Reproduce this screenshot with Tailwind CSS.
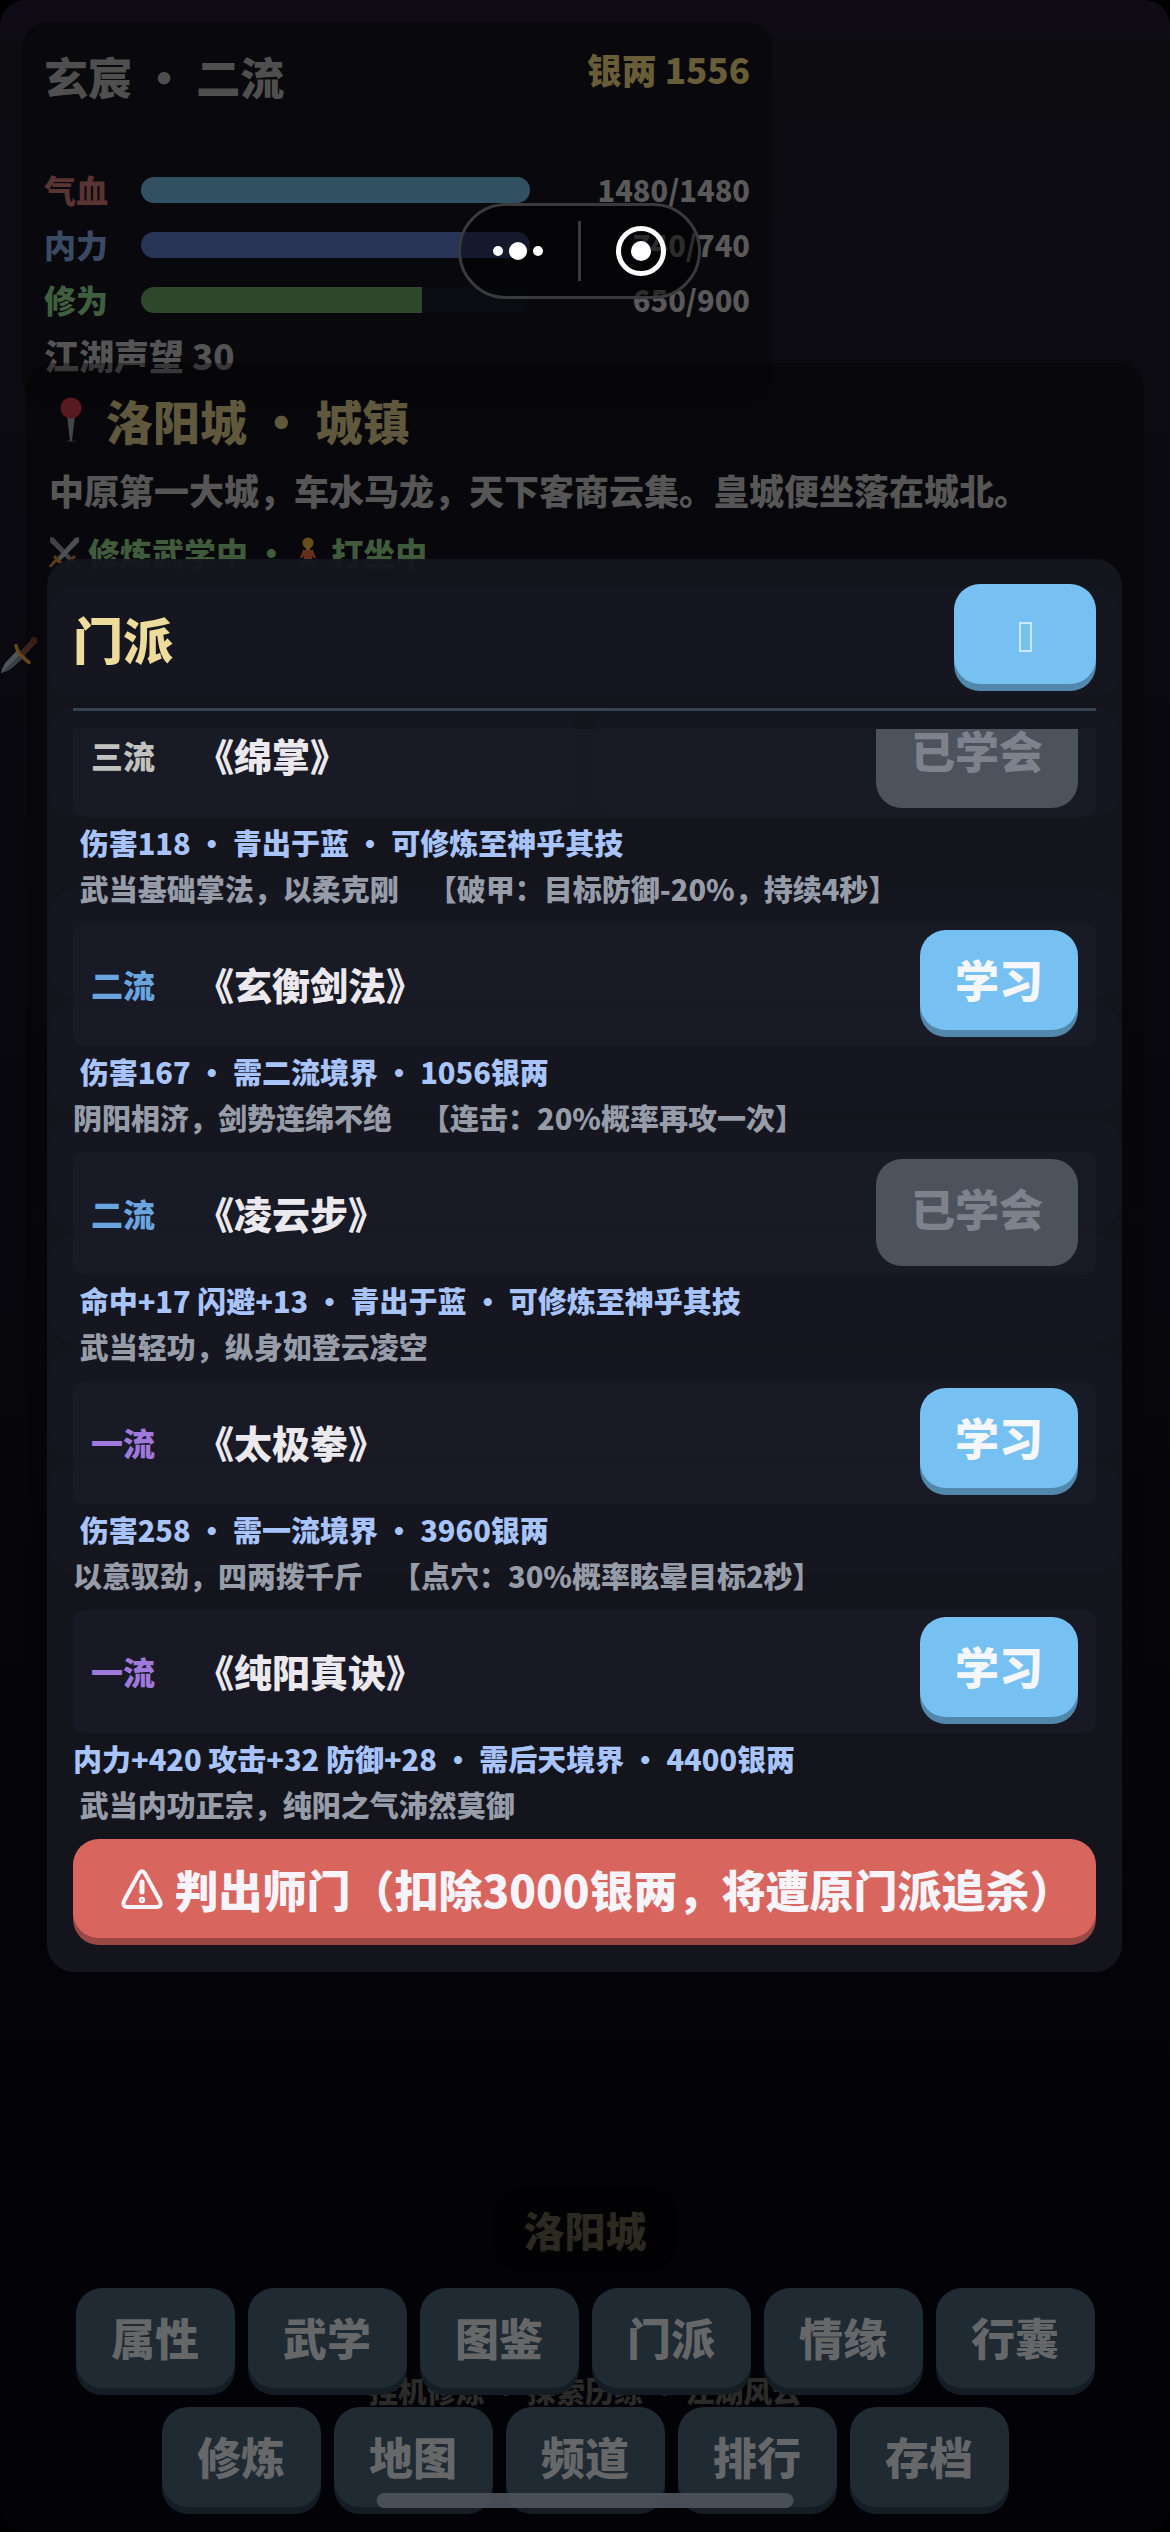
<!DOCTYPE html>
<html lang="zh-CN">
<head>
<meta charset="utf-8">
<meta name="viewport" content="width=device-width, initial-scale=1">
<title>门派</title>
<script src="https://cdn.jsdelivr.net/npm/@tailwindcss/browser@4"></script>
</head>
<body class="bg-black font-['Noto_Sans_CJK_SC',sans-serif] font-black [text-spacing-trim:space-all]">
<div class="relative isolate flex min-h-screen flex-col overflow-hidden rounded-[26px] bg-[linear-gradient(#0f0c15_0_37px,#0d0c11_37px,#0b0a10_540px,#06050a_1500px,#030207_2100px)]">

  <!-- Player status -->
  <section class="ml-[22px] mt-[22px] h-[381px] w-[750px] rounded-[26px] bg-[#09090d] px-[22px] pt-[22px] text-[#595959]">
    <header class="flex h-[118px] items-start justify-between">
      <h1 class="text-[44px] leading-[64px] text-[#4f4f4f]">玄宸 · 二流</h1>
      <p class="text-[35px] leading-[50px] text-[#685d37]">银两 1556</p>
    </header>
    <dl class="text-[32px] leading-[55px]">
      <div class="flex items-center">
        <dt class="w-[97px] text-[#5a3432]">气血</dt>
        <dd class="h-[26px] w-[389px] rounded-full bg-[#315163]"></dd>
        <dd class="flex-1 text-right text-[29px]">1480/1480</dd>
      </div>
      <div class="flex items-center">
        <dt class="w-[97px] text-[#3a4964]">内力</dt>
        <dd class="h-[26px] w-[389px] rounded-full bg-[#283557]"></dd>
        <dd class="flex-1 text-right text-[29px]">740/740</dd>
      </div>
      <div class="flex items-center">
        <dt class="w-[97px] text-[#3f5f3e]">修为</dt>
        <dd class="h-[26px] w-[389px] overflow-hidden rounded-full bg-[#090d12]"><div class="h-full bg-[#2c4729]" style="width:72.2%"></div></dd>
        <dd class="flex-1 text-right text-[29px]">650/900</dd>
      </div>
    </dl>
    <p class="text-[35px] leading-[56px] text-[#545454]">江湖声望 30</p>
  </section>

  <!-- Location scene -->
  <section class="-mt-[40px] mx-[26px] flex flex-1 flex-col rounded-[26px] bg-linear-to-b from-black/35 to-black/0 px-[23px] pt-[22px] text-[#565656]">
    <h2 class="flex h-[70px] items-center text-[47px] text-[#5f583c]">
      <svg class="ml-[10px] mr-[23px] h-[46px] w-[24px]" viewBox="0 0 24 46" aria-hidden="true"><ellipse cx="12" cy="44" rx="5" ry="1.5" fill="#17171a"/><path d="M8 18h8l-3 26h-2z" fill="#41474b"/><circle cx="12" cy="11" r="10.5" fill="#591a1f"/></svg>
      洛阳城 · 城镇
    </h2>
    <p class="text-[35px] leading-[70px]">中原第一大城，车水马龙，天下客商云集。皇城便坐落在城北。</p>
    <p class="flex h-[54px] items-center text-[32px] text-[#3f5b3c]">
      <svg class="mr-[8px] h-[30px] w-[31px]" viewBox="0 0 31 30" aria-hidden="true"><path d="M1 0l4 1 20 22-3 3L1 5z" fill="#3f4346"/><path d="M30 0l-4 1L6 23l3 3L30 5z" fill="#4b4f52"/><path d="M5 19l8 8M1 30l6-7M26 19l-8 8M30 30l-6-7" stroke="#5c3a16" stroke-width="3"/></svg>
      修炼武学中 ·
      <svg class="ml-[10px] mr-[12px] h-[31px] w-[22px]" viewBox="0 0 22 31" aria-hidden="true"><circle cx="11" cy="6" r="5.500" fill="#65501b"/><path d="M9 10h4v4H9z" fill="#65501b"/><path d="M6 13h10l3 8h-3l-1-3v4H7v-4l-1 3H3z" fill="#632f1c"/><path d="M1 28q10-10 20 0z" fill="#3d3327"/></svg>
      打坐中
    </p>

    <!-- Scene actions, seen faintly through the sect panel -->
    <div class="mt-[9px] grid grid-cols-2 gap-x-[16px] gap-y-[13px]" aria-hidden="true">
      <div class="col-span-2 h-[107px] rounded-[26px] bg-[#1f2a33]"></div>
      <div class="h-[107px] rounded-[26px] bg-[#1f2a33]"></div>
      <div class="h-[107px] rounded-[26px] bg-[#1f2a33]"></div>
    </div>
    <div class="mt-[75px] flex flex-col gap-[8px]" aria-hidden="true">
      <div class="h-[107px] rounded-[26px] bg-[#1f2a33]"></div>
      <div class="h-[107px] rounded-[26px] bg-[#1f2a33]"></div>
      <div class="h-[107px] rounded-[26px] bg-[#1f2a33]"></div>
      <div class="h-[107px] rounded-[26px] bg-[#1f2a33]"></div>
      <div class="h-[107px] rounded-[26px] bg-[#1f2a33]"></div>
      <div class="h-[107px] rounded-[26px] bg-[#1f2a33]"></div>
    </div>
    <p class="mt-auto mb-[17px] self-center rounded-[26px] bg-black/40 px-[30px] text-[41px] leading-[82px] text-[#2b2920]">洛阳城</p>
  </section>

  <!-- Bottom navigation -->
  <nav class="relative flex flex-wrap justify-center gap-[13px] px-[70px] pb-[19px] pt-px text-[44px] leading-[98px] text-[#666769]">
    <p class="absolute inset-x-0 top-[81px] -z-10 text-center text-[29px] leading-[44px] text-[#2b2b29]">挂机修炼 · 探索历练 · 江湖风云</p>
    <button class="mb-[6px] h-[100px] w-[159px] rounded-[26px] bg-[#1f2a33] pb-[2px] shadow-[0_7px_0_#151d24]">属性</button>
    <button class="mb-[6px] h-[100px] w-[159px] rounded-[26px] bg-[#1f2a33] pb-[2px] shadow-[0_7px_0_#151d24]">武学</button>
    <button class="mb-[6px] h-[100px] w-[159px] rounded-[26px] bg-[#1f2a33] pb-[2px] shadow-[0_7px_0_#151d24]">图鉴</button>
    <button class="mb-[6px] h-[100px] w-[159px] rounded-[26px] bg-[#1f2a33] pb-[2px] shadow-[0_7px_0_#151d24]">门派</button>
    <button class="mb-[6px] h-[100px] w-[159px] rounded-[26px] bg-[#1f2a33] pb-[2px] shadow-[0_7px_0_#151d24]">情缘</button>
    <button class="mb-[6px] h-[100px] w-[159px] rounded-[26px] bg-[#1f2a33] pb-[2px] shadow-[0_7px_0_#151d24]">行囊</button>
    <button class="mb-[6px] h-[100px] w-[159px] rounded-[26px] bg-[#1f2a33] pb-[2px] shadow-[0_7px_0_#151d24]">修炼</button>
    <button class="mb-[6px] h-[100px] w-[159px] rounded-[26px] bg-[#1f2a33] pb-[2px] shadow-[0_7px_0_#151d24]">地图</button>
    <button class="mb-[6px] h-[100px] w-[159px] rounded-[26px] bg-[#1f2a33] pb-[2px] shadow-[0_7px_0_#151d24]">频道</button>
    <button class="mb-[6px] h-[100px] w-[159px] rounded-[26px] bg-[#1f2a33] pb-[2px] shadow-[0_7px_0_#151d24]">排行</button>
    <button class="mb-[6px] h-[100px] w-[159px] rounded-[26px] bg-[#1f2a33] pb-[2px] shadow-[0_7px_0_#151d24]">存档</button>
    <div class="absolute bottom-[24px] left-1/2 h-[15px] w-[417px] -translate-x-1/2 rounded-full bg-[#4b5159]/95"></div>
  </nav>

  <!-- Dagger sprite at the screen edge -->
  <svg class="absolute left-0 top-[636px] h-[38px] w-[38px]" viewBox="0 0 38 38" aria-hidden="true"><path d="M1 37Q3 28 9 23L18 13l7 7L14 30Q9 35 1 37z" fill="#4f5457"/><path d="M1 37L22 17l3 3-11 10Q9 35 1 37z" fill="#3a3f43"/><path d="M16 9.500q1 8 13 17" fill="none" stroke="#65461a" stroke-width="3.500" stroke-linecap="round"/><path d="M22 18L34 5" stroke="#3d231e" stroke-width="6"/><circle cx="34" cy="4.500" r="3.500" fill="#381a17"/></svg>

  <!-- Host app capsule -->
  <div class="absolute left-[458px] top-[203px] flex h-[96px] w-[243px] items-center justify-between rounded-full border-3 border-[#3a3a3c] bg-black/50 pl-[32px] pr-[32px]">
    <button class="flex items-center gap-[6px]" aria-label="更多">
      <span class="size-[10px] rounded-full bg-white"></span><span class="size-[18px] rounded-full bg-white"></span><span class="size-[10px] rounded-full bg-white"></span>
    </button>
    <span class="h-[60px] w-[3px] bg-[#3a3a3c]"></span>
    <button class="flex size-[50px] items-center justify-center rounded-full border-5 border-white" aria-label="关闭小程序"><span class="size-[20px] rounded-full bg-white"></span></button>
  </div>

  <!-- Sect panel -->
  <section role="dialog" aria-labelledby="sect-title" class="absolute left-[47px] right-[48px] top-[559px] rounded-[27px] bg-[#15151f]/94 px-[26px] pb-[34px] pt-[25px]">
    <header class="flex h-[127px] items-start justify-between border-b-3 border-[#344352]">
      <h2 id="sect-title" class="text-[50px] leading-[108px] text-[#eddc9b]">门派</h2>
      <button class="flex h-[100px] w-[142px] items-center justify-center rounded-[26px] bg-[#76c1f1] shadow-[0_7px_0_#5188ab]" aria-label="关闭"><svg class="mt-[6px] h-[30px] w-[13px]" viewBox="0 0 13 30" fill="none" stroke="#e8f4fd" stroke-width="1.500"><path d="M1 1h11v28H1z"/></svg></button>
    </header>
    <ul class="mt-[18px] flex h-[1110px] flex-col justify-end overflow-hidden text-[29px] leading-[44px]">
      <li class="pb-[13px]">
        <div class="flex h-[123px] items-center rounded-[12px] bg-[#1e2130]/40 px-[18px] pb-[2px]">
          <span class="w-[105px] text-[32px] text-[#c2c2be]">三流</span>
          <h3 class="flex-1 text-[38px] text-[#ebe9ee]">《绵掌》</h3>
          <button disabled class="h-[107px] rounded-[26px] bg-[#4d535d] px-[35px] pb-[9px] text-[44px] text-[#7e828d]">已学会</button>
        </div>
        <p class="mt-[3px] text-[#a8c4fb]">&nbsp;伤害118 · 青出于蓝 · 可修炼至神乎其技</p>
        <p class="mt-[2px] text-[#979ca9]">&nbsp;武当基础掌法，以柔克刚　【破甲：目标防御-20%，持续4秒】</p>
      </li>
      <li class="pb-[13px]">
        <div class="flex h-[123px] items-center rounded-[12px] bg-[#1e2130]/40 px-[18px] pb-[2px]">
          <span class="w-[105px] text-[32px] text-[#6aa5e0]">二流</span>
          <h3 class="flex-1 text-[38px] text-[#ebe9ee]">《玄衡剑法》</h3>
          <button class="mb-[7px] h-[100px] rounded-[26px] bg-[#76c1f1] px-[35px] pb-[2px] text-[44px] text-[#f5f7fd] shadow-[0_7px_0_#5188ab]">学习</button>
        </div>
        <p class="mt-[3px] text-[#a8c4fb]">&nbsp;伤害167 · 需二流境界 · 1056银两</p>
        <p class="mt-[2px] text-[#979ca9]">阴阳相济，剑势连绵不绝　【连击：20%概率再攻一次】</p>
      </li>
      <li class="pb-[13px]">
        <div class="flex h-[123px] items-center rounded-[12px] bg-[#1e2130]/40 px-[18px] pb-[2px]">
          <span class="w-[105px] text-[32px] text-[#6aa5e0]">二流</span>
          <h3 class="flex-1 text-[38px] text-[#ebe9ee]">《凌云步》</h3>
          <button disabled class="h-[107px] rounded-[26px] bg-[#4d535d] px-[35px] pb-[9px] text-[44px] text-[#7e828d]">已学会</button>
        </div>
        <p class="mt-[3px] text-[#a8c4fb]">&nbsp;命中+17 闪避+13 · 青出于蓝 · 可修炼至神乎其技</p>
        <p class="mt-[2px] text-[#979ca9]">&nbsp;武当轻功，纵身如登云凌空</p>
      </li>
      <li class="pb-[13px]">
        <div class="flex h-[123px] items-center rounded-[12px] bg-[#1e2130]/40 px-[18px] pb-[2px]">
          <span class="w-[105px] text-[32px] text-[#a079dc]">一流</span>
          <h3 class="flex-1 text-[38px] text-[#ebe9ee]">《太极拳》</h3>
          <button class="mb-[7px] h-[100px] rounded-[26px] bg-[#76c1f1] px-[35px] pb-[2px] text-[44px] text-[#f5f7fd] shadow-[0_7px_0_#5188ab]">学习</button>
        </div>
        <p class="mt-[3px] text-[#a8c4fb]">&nbsp;伤害258 · 需一流境界 · 3960银两</p>
        <p class="mt-[2px] text-[#979ca9]">以意驭劲，四两拨千斤　【点穴：30%概率眩晕目标2秒】</p>
      </li>
      <li class="pb-[13px]">
        <div class="flex h-[123px] items-center rounded-[12px] bg-[#1e2130]/40 px-[18px] pb-[2px]">
          <span class="w-[105px] text-[32px] text-[#a079dc]">一流</span>
          <h3 class="flex-1 text-[38px] text-[#ebe9ee]">《纯阳真诀》</h3>
          <button class="mb-[7px] h-[100px] rounded-[26px] bg-[#76c1f1] px-[35px] pb-[2px] text-[44px] text-[#f5f7fd] shadow-[0_7px_0_#5188ab]">学习</button>
        </div>
        <p class="mt-[3px] text-[#a8c4fb]">内力+420 攻击+32 防御+28 · 需后天境界 · 4400银两</p>
        <p class="mt-[2px] text-[#979ca9]">&nbsp;武当内功正宗，纯阳之气沛然莫御</p>
      </li>
    </ul>
    <button class="flex h-[99px] w-full items-center justify-center whitespace-nowrap rounded-[26px] bg-[#d8665f] pl-[26px] text-[44px] text-[#f7f5fb] shadow-[0_7px_0_#9b4845]">
      <svg class="mr-[11px] h-[40px] w-[42px]" viewBox="0 0 42 40" fill="none" stroke="currentColor" stroke-width="4" stroke-linecap="round" stroke-linejoin="round" aria-hidden="true"><path d="M18 4.500Q21 0 24 4.500L39 32Q41 37.500 36 38H6Q1 37.500 3 32Z"/><path d="M21 13v10" stroke-width="5"/><circle cx="21" cy="31" r="1.200"/></svg>
      判出师门（扣除3000银两，将遭原门派追杀）
    </button>
  </section>
</div>
</body>
</html>
